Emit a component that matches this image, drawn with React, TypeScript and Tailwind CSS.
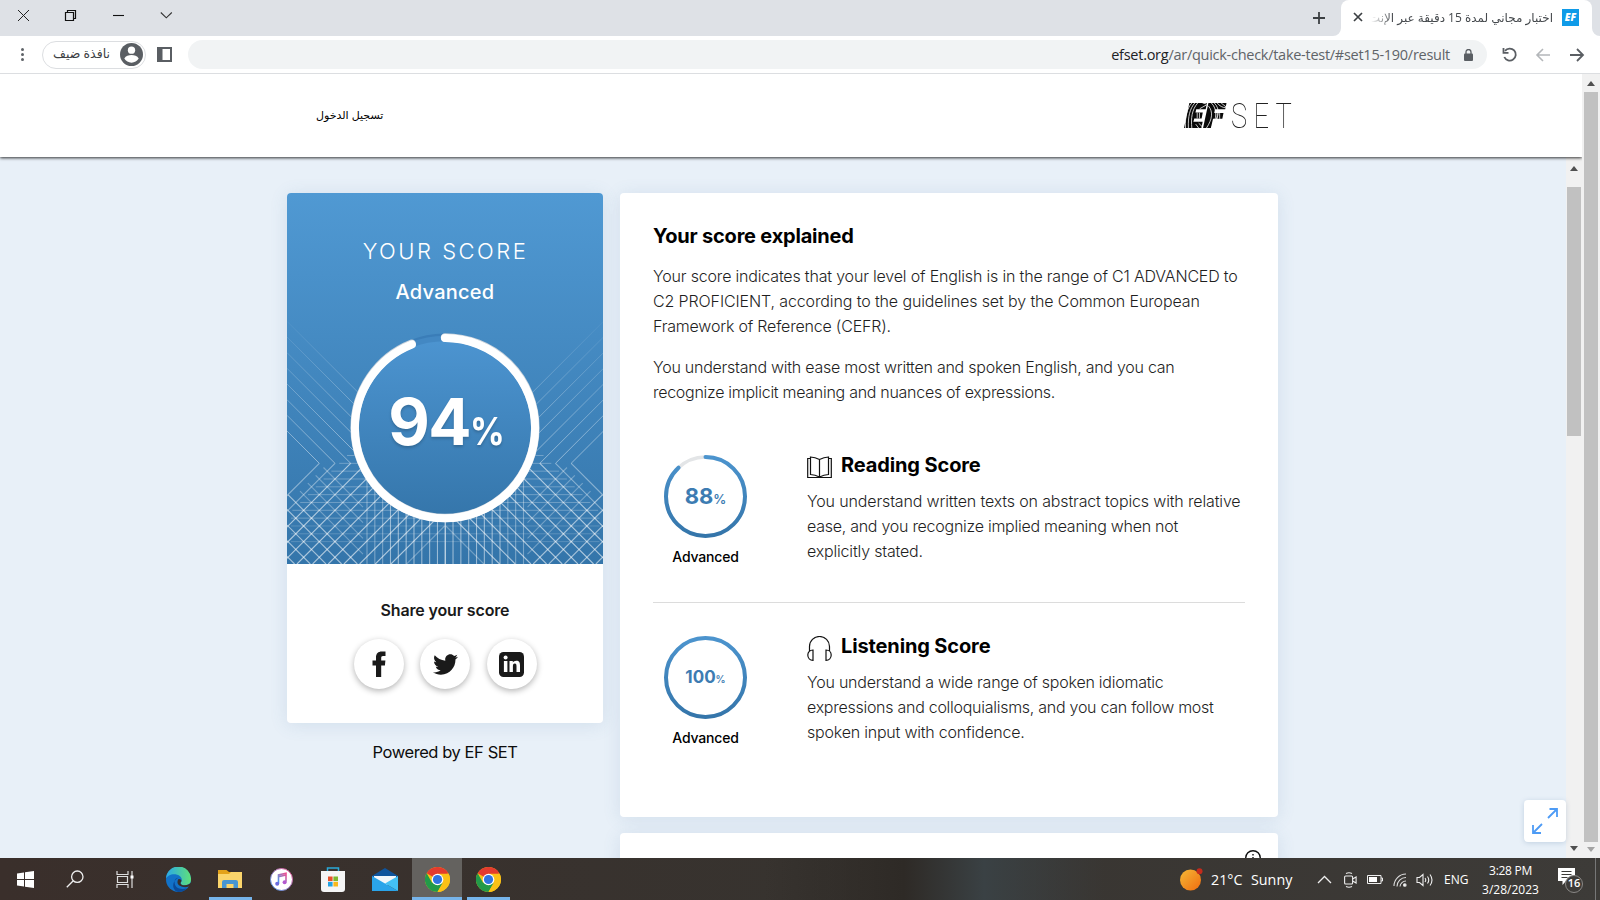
import { type ReactNode } from "react";
import { FaTwitter } from "react-icons/fa";

const ui = "font-['Open_Sans','Noto_Sans','DejaVu_Sans',sans-serif]";

function TopBar() {
  return (
    <div className="flex h-9 shrink-0 items-stretch bg-[#dee1e6]">
      <div className="flex items-center pb-1">
        <svg className="ml-4 h-4 w-4" viewBox="0 0 16 16" stroke="#222" strokeWidth="1" fill="none"><path d="M2 2l11 11M13 2l-11 11" /></svg>
        <svg className="ml-8 h-4 w-4" viewBox="0 0 16 16" stroke="#111" strokeWidth="1.200" fill="none"><path d="M1.500 4.500h8v8h-8zM3.500 4.500v-2h8v8h-2" /></svg>
        <svg className="ml-8 h-4 w-4" viewBox="0 0 16 16" stroke="#111" strokeWidth="1.100" fill="none"><path d="M1 7.500h11" /></svg>
        <svg className="ml-8 h-4 w-4" viewBox="0 0 16 16" stroke="#333" strokeWidth="1.100" fill="none"><path d="M.8 4.500l5.500 5.300 5.500-5.300" /></svg>
      </div>
      <div className="flex-1" />
      <svg className="mr-[14px] mt-[10px] h-4 w-4" viewBox="0 0 16 16" stroke="#3c4043" strokeWidth="1.800"><path d="M8 2v12M2 8h12" /></svg>
      <div className="relative flex w-[251px] shrink-0 items-center rounded-t-lg bg-white pb-[2px] pl-3">
        <svg className="absolute -left-2 bottom-0 h-2 w-2" viewBox="0 0 8 8"><path d="M8 0v8H0a8 8 0 008-8z" fill="#fff" /></svg>
        <svg className="absolute -right-2 bottom-0 h-2 w-2" viewBox="0 0 8 8"><path d="M0 0v8h8a8 8 0 01-8-8z" fill="#fff" /></svg>
        <svg className="h-2.5 w-2.5 shrink-0" viewBox="0 0 10 10" stroke="#3c4043" strokeWidth="1.700"><path d="M1 1l8 8M9 1l-8 8" /></svg>
        <div dir="rtl" className="-mt-[2px] ml-2 w-[182px] overflow-hidden mask-l-from-88%">
          <span className={`whitespace-nowrap text-[12px] text-[#45494d] ${ui}`}>اختبار مجاني لمدة 15 دقيقة عبر الإنت</span>
        </div>
        <div className="ml-[9px] flex h-[17px] w-[17px] shrink-0 items-center justify-center bg-[#0f9be8] font-['Open_Sans',sans-serif] text-[10px] font-extrabold italic text-white">EF</div>
      </div>
      <div className="w-2" />
    </div>
  );
}

function ToolBar() {
  return (
    <div className="flex h-[38px] shrink-0 items-center border-b border-[#dcdee1] bg-white">
      <div className="ml-[21px] flex flex-col gap-[2px]">
        <i className="h-[3px] w-[3px] rounded-full bg-[#5f6368]" /><i className="h-[3px] w-[3px] rounded-full bg-[#5f6368]" /><i className="h-[3px] w-[3px] rounded-full bg-[#5f6368]" />
      </div>
      <div className="ml-[18px] flex h-7 w-[104px] items-center justify-between rounded-full border border-[#dcdee1] pl-[10px] pr-[2px]">
        <span dir="rtl" className={`whitespace-nowrap text-[12.500px] text-[#3c4043] ${ui}`}>نافذة ضيف</span>
        <svg className="h-[23px] w-[23px]" viewBox="0 0 24 24"><circle cx="12" cy="12" r="12" fill="#5a5e63" /><circle cx="12" cy="7.500" r="3.800" fill="#fff" /><path d="M4.500 16.200c1.500-3 4.500-3.700 7.500-3.700s6 .7 7.500 3.700c-1.600 2.500-4.400 4.300-7.500 4.300s-5.900-1.800-7.500-4.300z" fill="#fff" /></svg>
      </div>
      <svg className="ml-[11px] h-[15px] w-[15px]" viewBox="0 0 15 15"><path d="M0 0h15v15H0zM5.500 2v11H13V2z" fill="#5a5e63" fillRule="evenodd" /></svg>
      <div className="ml-4 flex h-[29px] w-[1299px] items-center justify-end rounded-full bg-[#f1f3f4] pr-[14px]">
        <span className={`whitespace-nowrap text-[14.500px] tracking-[-0.270px] text-[#5f6368] ${ui}`}><span className="text-[#202124]">efset.org</span>/ar/quick-check/take-test/#set15-190/result</span>
        <svg className="ml-[14px] h-3 w-[9px]" viewBox="0 0 9 12"><rect y="4.500" width="9" height="7.500" rx="1" fill="#5a5e63" /><path d="M2 5V3a2.500 2.500 0 015 0v2" fill="none" stroke="#5a5e63" strokeWidth="1.300" /></svg>
      </div>
      <svg className="ml-[15px] h-4 w-4" viewBox="0 0 16 16" fill="none" stroke="#5a5e63" strokeWidth="1.800"><path d="M3 3.900A6 6 0 1 1 2.300 10" /><path d="M1.500 1v4.800h5" /></svg>
      <svg className="ml-[17px] h-4 w-4" viewBox="0 0 16 16" fill="none" stroke="#b4b7ba" strokeWidth="1.600"><path d="M15 8H2M8 2L2 8l6 6" /></svg>
      <svg className="ml-[18px] h-4 w-4" viewBox="0 0 16 16" fill="none" stroke="#5a5e63" strokeWidth="1.800"><path d="M1 8h13M8 2l6 6-6 6" /></svg>
    </div>
  );
}

function Logo() {
  return (
    <div className="flex items-end pt-px">
      <svg className="mb-px h-[25px] w-[43px] shrink-0" viewBox="0 0 44 26" preserveAspectRatio="none">
        <g fill="#0a0a0a"><path d="M5.500 0h18l-1.300 6.500H12.500l-.8 3.500h7.500l-1.200 6h-7.500l-.9 3.500h9.500L17.800 26H0z" /><path d="M25 0h18.500l-1.300 6.500H31.800l-.9 4h9.500l-1.200 6h-9.500L27.500 26h-8z" /></g>
        <g fill="none" stroke="#fff" strokeWidth=".8"><path d="M8 0C3 6 1 14 1.500 26M11 0C6 6 4 14 4.500 26M14 0C8 7 7 16 8 26M28 0c6 6 6 16 0 26M31 0c6 6 5 15-1 20M25 3c5 6 4 14-2 23M34 0c2 3 6 5 9 5M38 0l5 4M16 6l7-4M19 0l4 1M15 21l4 4M12 22l3 4M13.500 10v6M15.800 10v6M34 10.500v6M36.500 10.500v6" /></g>
      </svg>
      <div className="ml-[4px] h-[26px] w-[60px]">
        <span className="inline-block origin-left scale-x-[.78] font-[Roboto,sans-serif] text-[35px] font-thin leading-[27px] tracking-[8px] text-[#222]">SET</span>
      </div>
    </div>
  );
}

const K = [0, 1, 2, 3, 4, 5, 6, 7, 8, 9, 10, 11, 12];
const P = 15.67;

function HalfMesh() {
  return (
    <g fill="none" stroke="#fff">
      {K.slice(0, 8).map((k) => <path key={"u" + k} d={`M0 ${238 - P * k}L${32.3 + P * k} 270.300`} strokeWidth="1" stroke="url(#up)" />)}
      {K.map((k) => {
        const s = 302.6 + P * k;
        const y0 = k === 12 ? 333 : 270.3;
        return <path key={"d" + k} d={`M${s - y0} ${y0}L${s - 371} 371`} strokeWidth="1.100" strokeOpacity={k === 12 ? 0.3 : k < 2 ? 0.4 : 0.6} />;
      })}
      {[-4, -3, -2, -1, 0, 1, 2, 3, 4].map((k) => {
        const c = 300.7 - P * k;
        const x0 = Math.max(0, (303 - c) / 2 + (k > 0 ? 4 : 0));
        const x1 = Math.min(371 - c, 76);
        return <path key={"r" + k} d={`M${x0} ${c + x0}L${x1} ${c + x1}`} strokeOpacity={k > 0 ? 0.3 : 0.55} strokeWidth="1.100" />;
      })}
      {K.slice(0, 12).map((k) => <path key={"h" + k} d={`M${Math.max(4, 60 - k * 7.8)} ${262.5 + k * 7.83}H158`} strokeOpacity={k > 8 ? 0.18 : 0.27} />)}
      {K.slice(0, 11).map((k) => <path key={"v" + k} d={`M${80 + k * 7.83} ${286}V371`} strokeOpacity={k < 3 ? 0.35 : 0.5} strokeWidth="1.100" />)}
    </g>
  );
}

function ScoreArt() {
  return (
    <svg className="col-start-1 row-start-1 h-[371px] w-[316px]" viewBox="0 0 316 371">
      <defs>
        <linearGradient id="up" gradientUnits="userSpaceOnUse" x1="0" y1="115" x2="0" y2="270"><stop offset="0" stopColor="#fff" stopOpacity="0" /><stop offset="1" stopColor="#fff" stopOpacity=".45" /></linearGradient>
        <linearGradient id="disc" x1="0" y1="0" x2="0" y2="1"><stop offset="0" stopColor="#4c94d0" /><stop offset="1" stopColor="#3576ab" /></linearGradient>
      </defs>
      <HalfMesh />
      <g transform="translate(316.500 0) scale(-1 1)"><HalfMesh /></g>
      <circle cx="158" cy="234.700" r="94.300" fill="#3a7db8" />
      <circle cx="158" cy="235.200" r="92.500" fill="#4388c3" />
      <circle cx="158" cy="235.200" r="87" fill="url(#disc)" />
      <circle cx="158" cy="234.700" r="90.300" fill="none" stroke="#c9d3dc" strokeWidth="8.500" strokeLinecap="round" pathLength="100" strokeDasharray="94 6" transform="rotate(-90 158 234.700)" />
      <circle cx="158" cy="235.200" r="90.100" fill="none" stroke="#fff" strokeWidth="8" strokeLinecap="round" pathLength="100" strokeDasharray="94 6" transform="rotate(-90 158 235.200)" />
    </svg>
  );
}

function Share({ children }: { children: ReactNode }) {
  return <div className="flex h-[50px] w-[50px] items-center justify-center rounded-full bg-white text-[#1a1a1a] shadow-[0_2px_6px_rgba(0,0,0,0.3)]">{children}</div>;
}

function ScoreCard() {
  return (
    <div className="flex w-[316px] flex-col">
      <div className="flex h-[530px] shrink-0 flex-col overflow-hidden rounded bg-white shadow-[0_2px_18px_rgba(80,120,160,0.14)]">
        <div className="grid h-[371px] bg-linear-to-b from-[#5099d3] to-[#3475aa]">
          <ScoreArt />
          <div className="col-start-1 row-start-1 flex flex-col items-center font-[Inter,sans-serif] text-white">
            <span className="mt-[44px] pl-px text-[22px] font-light leading-7 tracking-[2.500px]">YOUR SCORE</span>
            <span className="mt-[13px] text-[20px] font-medium leading-7 tracking-[0.250px]">Advanced</span>
            <div className="mt-[76px] flex items-baseline pl-[3px] font-bold text-shadow-[0_2px_3px_rgba(0,0,0,0.2)]">
              <span className="text-[64px] leading-[80px] tracking-[-1.500px]">94</span>
              <span className="-mr-[4px] origin-left scale-x-[.9] text-[38px]">%</span>
            </div>
          </div>
        </div>
        <div className="flex flex-col items-center">
          <span className="mt-[34px] font-[Inter,sans-serif] text-[16px] font-semibold leading-6 tracking-[-0.150px] text-[#1a1a1a]">Share your score</span>
          <div className="mt-[17px] flex gap-[16.500px]">
            <Share>
              <svg className="h-[26px] w-[14px]" viewBox="0 0 14 26" fill="currentColor"><path d="M4 26V14.500H.5V9.500H4V6.500C4 2.500 6.200.5 9.800.5H13.500V5H11C9.600 5 9.200 5.700 9.200 7v2.500h4.200l-.5 5H9.200V26z" /></svg>
            </Share>
            <Share><FaTwitter className="h-[25px] w-[25px]" /></Share>
            <Share>
              <svg className="h-[25px] w-[25px]" viewBox="0 0 25 25"><rect width="25" height="25" rx="4.500" fill="#1a1a1a" /><g fill="#fff"><circle cx="6.600" cy="5.600" r="2" /><path d="M4.900 9h3.500v11H4.900zM10.500 9h3.300v1.600c.7-1.200 2-1.900 3.500-1.900 3 0 3.700 2 3.700 4.800V20h-3.500v-5.700c0-1.500-.2-2.700-1.700-2.700s-1.900 1.200-1.900 2.700V20h-3.400z" /></g></svg>
            </Share>
          </div>
        </div>
      </div>
      <span className="mt-[17px] self-center font-[Inter,sans-serif] text-[16.500px] leading-6 tracking-[-0.430px] text-[#0d0d0d]">Powered by EF SET</span>
    </div>
  );
}

function Ring({ value, size }: { value: number; size: string }) {
  return (
    <div className="flex w-[105px] shrink-0 flex-col items-center">
      <div className="grid h-[83px] w-[83px] place-items-center">
        <svg className="col-start-1 row-start-1 h-[83px] w-[83px]" viewBox="0 0 83 83">
          <defs>
            <linearGradient id={"g" + value} x1="0" y1="0" x2="1" y2="0"><stop offset="0" stopColor="#3475aa" /><stop offset="1" stopColor="#4c94ce" /></linearGradient>
          </defs>
          <circle cx="41.500" cy="41.500" r="39.500" fill="none" stroke="#e3e5e7" strokeWidth="3.600" />
          <circle cx="41.500" cy="41.500" r="39.500" fill="none" stroke={`url(#g${value})`} strokeWidth="4" pathLength="100" strokeDasharray={`${value} 100`} strokeLinecap="round" transform="rotate(-90 41.500 41.500)" />
        </svg>
        <div className="col-start-1 row-start-1 flex items-baseline font-[Inter,sans-serif] font-bold text-[#3d7cb2]">
          <span className={size}>{value}</span><span className={value === 100 ? "text-[10px] font-semibold" : "text-[13px] font-semibold"}>%</span>
        </div>
      </div>
      <span className="mt-[9px] font-[Inter,sans-serif] text-[14px] font-medium leading-5 tracking-[-0.200px] text-black">Advanced</span>
    </div>
  );
}

const body = "font-[Inter,sans-serif] text-[16px] font-light leading-[25px] text-[#1f1f1f]";

function Line({ c, children }: { c: string; children: ReactNode }) {
  return <div className={`whitespace-nowrap ${c}`}>{children}</div>;
}

function Explained() {
  return (
    <div className="h-[624px] w-[658px] shrink-0 rounded bg-white px-[33px] pt-[29px] shadow-[0_2px_18px_rgba(80,120,160,0.14)]">
      <h2 className="h-7 font-[Inter,sans-serif] text-[20px] font-bold leading-7 tracking-[-0.200px] text-black">Your score explained</h2>
      <div className={`mt-[14px] ${body}`}>
        <Line c="tracking-[-0.180px]">Your score indicates that your level of English is in the range of C1 ADVANCED to</Line>
        <Line c="tracking-[-0.120px]">C2 PROFICIENT, according to the guidelines set by the Common European</Line>
        <Line c="tracking-[-0.200px]">Framework of Reference (CEFR).</Line>
      </div>
      <div className={`mt-[16px] ${body}`}>
        <Line c="tracking-[-0.250px]">You understand with ease most written and spoken English, and you can</Line>
        <Line c="tracking-[-0.285px]">recognize implicit meaning and nuances of expressions.</Line>
      </div>
      <div className="mt-[50px] flex h-[148px] border-b border-[#dcdcdc]">
        <Ring value={88} size="text-[22px]" />
        <div className="ml-[49px]">
          <h3 className="flex h-6 items-start font-[Inter,sans-serif] text-[20px] font-bold leading-6 text-black">
            <svg className="mr-[9px] h-[25px] w-[25px]" viewBox="0 0 25 25" fill="none" stroke="#111" strokeWidth="1.200"><path d="M12.500 4.500C9.500 3 6.500 2.200 3.500 2v17.500c3 .2 6 1 9 2.500 3-1.500 6-2.300 9-2.500V2c-3 .2-6 1-9 2.500zM12.500 4.500V22M3.500 3.500H.7v19h23.600v-19h-2.800" /></svg>
            <span className="-mt-[2px] tracking-[-0.120px]">Reading Score</span>
          </h3>
          <div className={`mt-[10px] ${body}`}>
            <Line c="tracking-[-0.145px]">You understand written texts on abstract topics with relative</Line>
            <Line c="tracking-[-0.265px]">ease, and you recognize implied meaning when not</Line>
            <Line c="tracking-[-0.180px]">explicitly stated.</Line>
          </div>
        </div>
      </div>
      <div className="mt-[33px] flex">
        <Ring value={100} size="text-[17px]" />
        <div className="ml-[49px]">
          <h3 className="flex h-6 items-start font-[Inter,sans-serif] text-[20px] font-bold leading-6 text-black">
            <svg className="mr-[9px] h-[25px] w-[25px]" viewBox="0 0 25 25" fill="none" stroke="#111" strokeWidth="1.200"><path d="M2.500 15V10.500a10 10 0 0120 0V15M6 14c-3 0-5.200 2-5.200 5s2.200 5.300 5.200 5.300zM19 14c3 0 5.200 2 5.200 5s-2.200 5.300-5.200 5.300z" /></svg>
            <span className="-mt-[2px] tracking-[-0.130px]">Listening Score</span>
          </h3>
          <div className={`mt-[10px] ${body}`}>
            <Line c="tracking-[-0.235px]">You understand a wide range of spoken idiomatic</Line>
            <Line c="tracking-[-0.270px]">expressions and colloquialisms, and you can follow most</Line>
            <Line c="tracking-[-0.210px]">spoken input with confidence.</Line>
          </div>
        </div>
      </div>
    </div>
  );
}

function Up({ c }: { c: string }) {
  return <svg className="h-[5px] w-2" viewBox="0 0 8 5"><path d="M0 5L4 0l4 5z" fill={c} /></svg>;
}
function Down({ c }: { c: string }) {
  return <svg className="h-[5px] w-2" viewBox="0 0 8 5"><path d="M0 0l4 5 4-5z" fill={c} /></svg>;
}

function Chrome() {
  return (
    <svg className="h-[25px] w-[25px]" viewBox="0 0 24 24">
      <circle cx="12" cy="12" r="12" fill="#fbc116" />
      <path d="M12 12L1.600 6A12 12 0 0122.400 6z" fill="#e33b2e" />
      <path d="M1.600 6A12 12 0 0012 24l5.200-9L12 12 6.800 15z" fill="#229a49" />
      <path d="M12 6.500h10.700A12 12 0 0112 24l5-9z" fill="#fbc116" />
      <circle cx="12" cy="12" r="5.600" fill="#fff" /><circle cx="12" cy="12" r="4.400" fill="#2f74e0" />
    </svg>
  );
}

function Slot({ w, on, line, children }: { w: string; on?: boolean; line?: boolean; children: ReactNode }) {
  return (
    <div className={`flex h-full flex-col items-center ${w} ${on ? "bg-[#64625f]" : ""}`}>
      <div className="flex flex-1 items-center pt-[3px]">{children}</div>
      <div className={`h-[3px] ${on ? "w-full" : "w-[43px]"} ${line ? "bg-[#76b4ea]" : ""}`} />
    </div>
  );
}

function TaskBar() {
  return (
    <div className={`flex h-[42px] shrink-0 items-stretch bg-linear-to-r from-[#3a2f2b] via-[#37332f] to-[#3d3b38] text-white ${ui}`}>
      <Slot w="w-[50px]"><svg className="h-[17px] w-[17px]" viewBox="0 0 17 17" fill="#fff"><path d="M0 2.400l7-1V8H0zM8 1.200L17 0v8H8zM0 9h7v6.600l-7-1zM8 9h9v8l-9-1.200z" /></svg></Slot>
      <Slot w="w-[50px]"><svg className="h-[18px] w-[18px]" viewBox="0 0 18 18" fill="none" stroke="#eee" strokeWidth="1.300"><circle cx="11.300" cy="6.700" r="5.700" /><path d="M7.300 10.700L.8 17.200" /></svg></Slot>
      <Slot w="w-[50px]"><svg className="h-[17px] w-[18px]" viewBox="0 0 18 17" fill="none" stroke="#ddd" strokeWidth="1.200"><path d="M1 0v3.500h11V0M1 17v-3.500h11V17M1.500 5.500h10v6h-10zM16 0v17" /><path d="M14.500 6h3" strokeWidth="3" stroke="#fff" /></svg></Slot>
      <Slot w="w-[56px]"><svg className="h-[25px] w-[25px]" viewBox="0 0 24 24">
        <defs><linearGradient id="e1" x1="0" y1="0" x2="1" y2="0"><stop offset="0" stopColor="#2aa8e8" /><stop offset="1" stopColor="#5fe07a" /></linearGradient></defs>
        <circle cx="12" cy="12" r="12" fill="#1272c8" />
        <path d="M0 11A12 12 0 0124 12c0 4-3 5.500-6 5.500-2.500 0-4-1-4-2 0-.7 1.200-1.200 1.200-3.200C15 9 11.500 7 8 7c-4 0-7 2-8 4z" fill="url(#e1)" />
        <path d="M8.500 12.500C7 19 12 22.500 20.500 20.500A12 12 0 0112 24C6 23 4.500 14 12 10c-2 .5-3 1.500-3.500 2.500z" fill="#0b4a98" />
        <path d="M12 11.500c1.800-.3 3 .8 2.800 2-.1.900-.8 1.300-.8 2 0 1 1.500 2 4 2 2.400 0 4.600-.8 6-2.300V18l-2 .8c-5 1.500-11-.3-11-4.300 0-1.200.3-2.200 1-3z" fill="#38302c" />
      </svg></Slot>
      <Slot w="w-[48px]" line><svg className="h-[20px] w-[24px]" viewBox="0 0 24 20"><path d="M0 1h8.500L11 3H24v5H0z" fill="#e3a21a" /><path d="M0 5h11l2-2h11v16H0z" fill="#fbd56b" /><path d="M4 19v-6a2 2 0 012-2h12a2 2 0 012 2v6h-4.500v-4h-7v4z" fill="#4796d3" /></svg></Slot>
      <Slot w="w-[54px]"><svg className="h-[23px] w-[23px]" viewBox="0 0 23 23"><defs><linearGradient id="it" x1="1" y1="0" x2="0" y2="1"><stop offset="0" stopColor="#f34f8e" /><stop offset="1" stopColor="#3f9bf0" /></linearGradient></defs><circle cx="11.500" cy="11.500" r="11" fill="#fff" stroke="url(#it)" /><path d="M8.500 15.500V7l7.500-1.800v8.600M8.500 8.800L16 7" fill="none" stroke="url(#it)" strokeWidth="1.600" /><circle cx="7.200" cy="15.800" r="2" fill="#6a6be0" /><circle cx="14.600" cy="14.200" r="2" fill="#b35ad0" /></svg></Slot>
      <Slot w="w-[50px]"><svg className="h-[25px] w-[24px]" viewBox="0 0 24 25"><path d="M6.500 5V1h11v4" fill="none" stroke="#2aa9d8" strokeWidth="1.500" /><path d="M0 4h24v18a3 3 0 01-3 3H3a3 3 0 01-3-3z" fill="#f5f5f5" /><path d="M7 9.500h4.600v4.600H7z" fill="#e8502a" /><path d="M12.400 9.500H17v4.600h-4.600z" fill="#7cb82f" /><path d="M7 14.900h4.600v4.600H7z" fill="#22a2e4" /><path d="M12.400 14.900H17v4.600h-4.600z" fill="#f9b81b" /></svg></Slot>
      <Slot w="w-[54px]"><svg className="h-[23px] w-[26px]" viewBox="0 0 26 23"><path d="M0 8L13 0l13 8v4H0z" fill="#0f549c" /><path d="M2 8h22v4l-11 6L2 12z" fill="#f2f6fa" /><path d="M0 8l26 15H0z" fill="#2aa4ea" /><path d="M26 8v15L13 15.500z" fill="#43c0f4" /></svg></Slot>
      <Slot w="w-[50px]" on line><Chrome /></Slot>
      <Slot w="w-[52px]" line><Chrome /></Slot>
      <div className="w-[250px]" />
      <div className="w-[140px] bg-linear-to-r from-[#37332f]/0 to-[#2e2a26]" />
      <div className="w-[80px] bg-linear-to-r from-[#2e2a26] to-[#3a4144]" />
      <div className="w-[120px] bg-linear-to-r from-[#3a4144] to-[#3a3936]/0" />
      <div className="flex-1" />
      <div className="flex shrink-0 items-center pt-px">
        <svg className="h-[24px] w-[24px]" viewBox="0 0 24 24"><defs><linearGradient id="sun" x1="0" y1="0" x2="1" y2="1"><stop offset="0" stopColor="#f6b936" /><stop offset="1" stopColor="#ef6c10" /></linearGradient></defs><circle cx="11.500" cy="12" r="10.500" fill="url(#sun)" /><circle cx="20.500" cy="3.200" r="3" fill="#c42b1c" /></svg>
        <span className="ml-[8px] w-[31px] whitespace-nowrap text-[14.300px]">21°C</span>
        <span className="ml-[9px] w-[41px] whitespace-nowrap text-[14.300px]">Sunny</span>
        <svg className="ml-[25px] h-[9px] w-[15px]" viewBox="0 0 15 9" fill="none" stroke="#eee" strokeWidth="1.300"><path d="M1 8l6.500-6.500L14 8" /></svg>
        <svg className="ml-[12px] h-[16px] w-[13px]" viewBox="0 0 13 16" fill="none" stroke="#eee" strokeWidth="1.100"><rect x=".6" y="4" width="8" height="8" rx="1" /><path d="M8.600 7l3.500-2v6l-3.500-2M2 1.500q3-1.500 6 0M2 14.500q3 1.500 6 0" /></svg>
        <svg className="ml-[10px] h-[9px] w-[16px]" viewBox="0 0 16 9"><path d="M.5.500h13.500v8H.5zM14 3h1.500v3H14" fill="none" stroke="#eee" /><path d="M2 2h8v5H2z" fill="#fff" /></svg>
        <svg className="ml-[10px] h-[14px] w-[14px]" viewBox="0 0 14 14" fill="none" stroke="#ddd" strokeWidth="1.100"><path d="M1 13A12 12 0 0113 1M4 13.500A9 9 0 0113 4.500M7 13.500A6 6 0 0113 8" /><circle cx="11.800" cy="12" r="1.300" fill="#fff" /></svg>
        <svg className="ml-[9px] h-[14px] w-[18px]" viewBox="0 0 18 14" fill="none" stroke="#eee" strokeWidth="1.100"><path d="M1 4.500h2.500L7 1.500v11L3.500 9.500H1zM9 5q1.500 2 0 4M11.500 3.500q2.500 3.500 0 7M14 1.500q4 5.500 0 11" /></svg>
        <span className="ml-[10px] w-[25px] text-[12px]">ENG</span>
        <div className="ml-[13px] flex w-[57px] flex-col items-center text-[12px] leading-[19px]">
          <span className="tracking-[-0.300px]">3:28 PM</span><span>3/28/2023</span>
        </div>
        <div className="relative ml-[19px] h-[26px] w-[27px]">
          <svg className="h-[18px] w-[17px]" viewBox="0 0 17 18"><path d="M0 1h17v13H8l-3.500 4v-4H0z" fill="#fff" /><path d="M3.500 4.500h10M3.500 7.500h10M3.500 10.500h6" stroke="#3d3b38" /></svg>
          <div className="absolute left-[7px] top-[8px] flex h-[18px] w-[18px] items-center justify-center rounded-full border border-[#8a8886] bg-[#3d3b38] text-[11px] font-semibold">16</div>
        </div>
      </div>
      <div className="ml-[10px] w-[5px] border-l border-[#777]" />
    </div>
  );
}

export default function App() {
  return (
    <div className="flex h-[900px] w-[1600px] flex-col overflow-hidden bg-white">
      <TopBar />
      <ToolBar />
      <div className="flex min-h-0 flex-1">
        <div className="flex w-[1582px] flex-col">
          <header className="relative z-10 flex h-[83px] shrink-0 items-center justify-between bg-white pl-[316px] pr-[291px] shadow-[0_1px_3px_rgba(0,0,0,0.8)] [clip-path:inset(0_0_-6px_0)]">
            <span dir="rtl" className="font-['Liberation_Sans','DejaVu_Sans',sans-serif] text-[11px] text-black">تسجيل الدخول</span>
            <Logo />
          </header>
          <div className="flex min-h-0 flex-1">
            <main className="flex w-[1566px] gap-[17px] bg-[#e8f0f8] pl-[287px] pt-9">
              <ScoreCard />
              <div className="flex flex-col gap-4">
                <Explained />
                <div className="flex h-[200px] w-[658px] shrink-0 justify-end rounded bg-white pr-[17px] pt-[17px] shadow-[0_2px_18px_rgba(80,120,160,0.14)]">
                  <svg className="h-4 w-4" viewBox="0 0 16 16" fill="none" stroke="#111" strokeWidth="1.400"><circle cx="8" cy="8" r="7.300" /><path d="M8 4v1.600M8 7v5" /></svg>
                </div>
              </div>
            </main>
            <div className="flex w-[16px] flex-col items-center bg-[#f1f1f1]">
              <div className="flex h-[30px] shrink-0 items-start pt-[9px]"><Up c="#505050" /></div>
              <div className="h-[249px] w-[14px] bg-[#c1c1c1]" />
              <div className="flex flex-1 items-end pb-[7px]"><Down c="#505050" /></div>
            </div>
          </div>
        </div>
        <div className="flex w-[18px] flex-col items-center bg-[#f1f1f1]">
          <div className="flex h-[18px] items-center pt-[1px]"><Up c="#505050" /></div>
          <div className="h-[750px] w-[14px] bg-[#c1c1c1]" />
          <div className="flex flex-1 items-end pb-[6px]"><Down c="#a3a3a3" /></div>
        </div>
      </div>
      <div className="absolute left-[1524px] top-[800px] z-20 flex h-[42px] w-[42px] items-center justify-center rounded bg-white shadow-[0_1px_5px_rgba(80,120,160,0.25)]">
        <svg className="h-[26px] w-[26px]" viewBox="0 0 26 26" fill="none" stroke="#4d9bf5" strokeWidth="1.800"><path d="M16 10l9-9M17.500 1H25v8M10 16l-9 9M1 17v8h8" /></svg>
      </div>
      <TaskBar />
    </div>
  );
}
